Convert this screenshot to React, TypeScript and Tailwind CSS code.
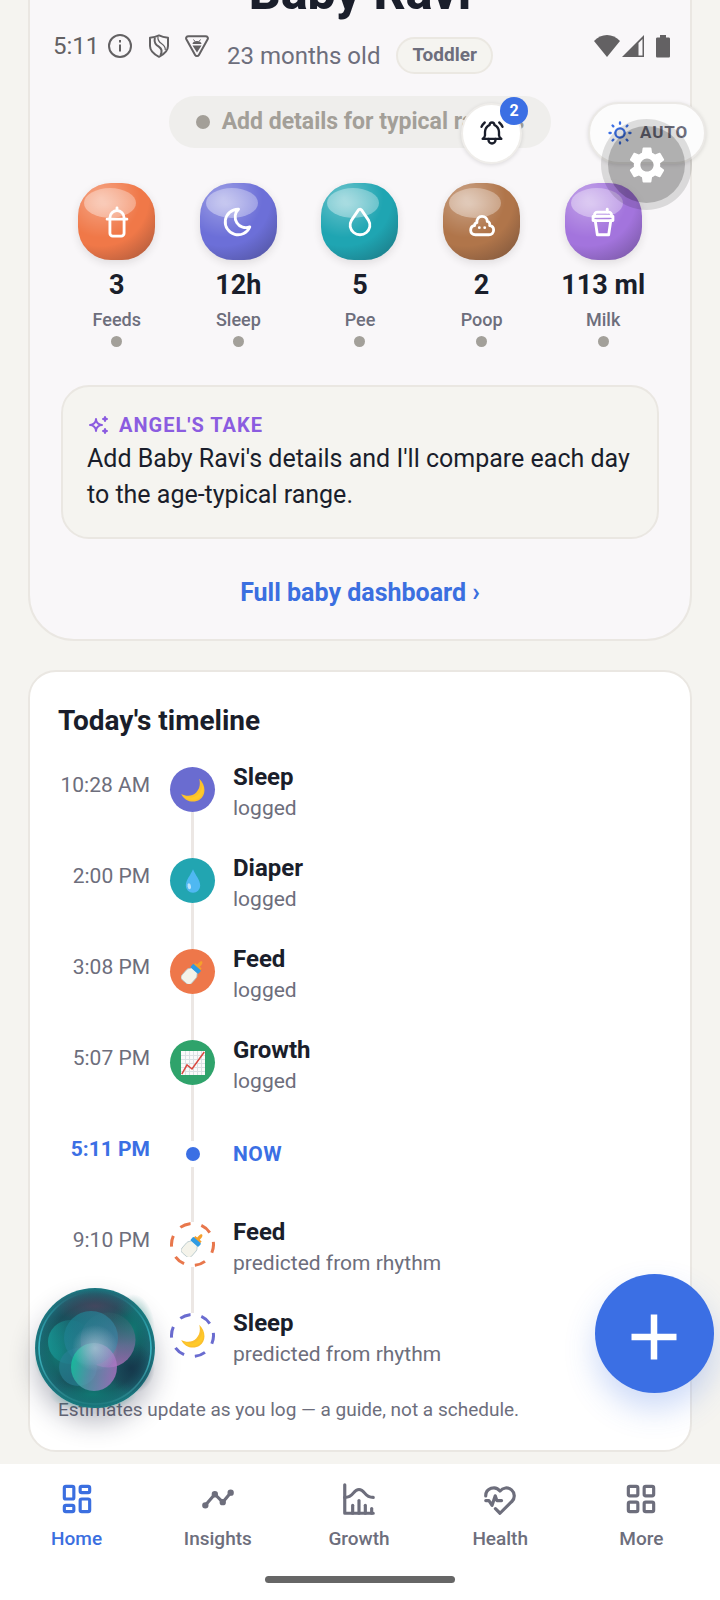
import type { ReactNode } from "react";
import { MdSettings } from "react-icons/md";
import {
  TbBellRinging,
  TbChartHistogram,
  TbCup,
  TbDroplet,
  TbHeartbeat,
  TbLayoutDashboard,
  TbLayoutGrid,
  TbMoon,
  TbSparkles,
  TbSun,
  TbTimeline,
} from "react-icons/tb";

interface Stat {
  icon: ReactNode;
  value: string;
  label: string;
  tile: string;
}

interface TimelineEntry {
  time: string;
  title: string;
  note: string;
  emoji: ReactNode;
  badge: string;
  ring?: string;
}

/* Line icons for the stat tiles */
function BabyBottleIcon() {
  return (
    <svg viewBox="0 0 24 24" className="size-[34px]" fill="none" stroke="currentColor" strokeWidth="2" strokeLinecap="round" strokeLinejoin="round">
      <path d="M5 10h14M12 2v2M12 4a5 5 0 0 1 5 5v11a2 2 0 0 1-2 2H9a2 2 0 0 1-2-2V9a5 5 0 0 1 5-5z" />
    </svg>
  );
}

function PooIcon() {
  return (
    <svg viewBox="0 0 24 24" className="size-[34px]" fill="none" stroke="currentColor" strokeWidth="2" strokeLinecap="round" strokeLinejoin="round">
      <path d="M8.400 12.400C8.200 10 9.700 8 12 8c2.200 0 3.700 1.600 3.700 3.600 1.500.3 2 1.600 1.700 2.900 1.700.2 2.800 1.500 2.800 3.100 0 2-1.400 3.400-3.400 3.400H7.300C5.300 21 4 19.600 4 17.900c0-1.800 1.100-3.100 2.700-3.300 0-1.200.6-2 1.700-2.200z" />
      <path d="M10.100 16h.01M13.900 16h.01" />
    </svg>
  );
}

/* Small colour glyphs */
function MoonGlyph() {
  return (
    <svg viewBox="0 0 24 24" className="size-6" aria-hidden="true">
      <path d="M18.3.8c7 6.800 6.600 16.400.5 20.700C12.800 25.500 3.500 23.500.2 15.900c5.300 2.900 11.300 2.300 15-1.500C18.800 10.700 19.500 6 18.300.8z" fill="#fbc02d" />
      <path d="M21.600 6.500c2 6-.3 12.300-5.200 14.600-4.800 2.200-10.800.6-14-3 5.300 2.400 10.800 1.800 14.500-1.700 3.100-2.900 4.400-6.300 4.700-9.900z" fill="#ffca28" />
    </svg>
  );
}

function DropGlyph() {
  return (
    <svg viewBox="0 0 24 24" className="size-6" aria-hidden="true">
      <path d="M12 .3c2.500 6.200 7.200 10.600 7.200 16.400A7.100 7.100 0 0 1 12 23.800a7.100 7.100 0 0 1-7.200-7.100C4.800 10.900 9.500 6.500 12 .3z" fill="#4fb8f2" />
      <ellipse cx="8.300" cy="17.300" rx="1.700" ry="3" fill="#b9e3fb" transform="rotate(-12 8.300 17.300)" />
    </svg>
  );
}

function BottleGlyph() {
  return (
    <svg viewBox="0 0 24 24" className="size-6" aria-hidden="true">
      <g transform="rotate(41 12 12)">
        <path d="M10.300 1.500c0-4.400 3.400-4.400 3.400 0v2.200h2.500v2.600H7.800V3.700h2.500z" fill="#f5a02c" />
        <path d="M8.200 9.500h7.600c.3 2 2.500 2.600 2.500 5v7c0 2.400-1.500 3.400-3.500 3.400H9.200c-2 0-3.500-1-3.500-3.400v-7c0-2.400 2.200-3 2.500-5z" fill="#f4f3ea" stroke="#b4c5c8" strokeWidth="0.8" />
        <rect x="6.700" y="5.600" width="10.600" height="4.600" rx="1" fill="#2f9be3" />
      </g>
    </svg>
  );
}

function ChartGlyph() {
  return (
    <svg viewBox="0 0 24 24" className="size-6" aria-hidden="true">
      <rect width="24" height="24" fill="#fafafa" />
      <path d="M4.500 0v24M8.500 0v24M12.500 0v24M16.500 0v24M20.500 0v24M0 4.500h24M0 8.500h24M0 12.500h24M0 16.500h24M0 20.500h24" stroke="#dbe1e4" strokeWidth="1" />
      <path d="M.8 23.200 6 14l5 4L23.300 1" fill="none" stroke="#d9483f" strokeWidth="1.500" />
    </svg>
  );
}

const stats: Stat[] = [
  { icon: <BabyBottleIcon />, value: "3", label: "Feeds", tile: "bg-[#f07848]" },
  { icon: <TbMoon />, value: "12h", label: "Sleep", tile: "bg-[#6c6fd8]" },
  { icon: <TbDroplet />, value: "5", label: "Pee", tile: "bg-[#1fa5b2]" },
  { icon: <PooIcon />, value: "2", label: "Poop", tile: "bg-[#b0754a]" },
  { icon: <TbCup />, value: "113 ml", label: "Milk", tile: "bg-[#a374dd]" },
];

const entries: TimelineEntry[] = [
  { time: "10:28 AM", title: "Sleep", note: "logged", emoji: <MoonGlyph />, badge: "bg-[#6a6cd0]" },
  { time: "2:00 PM", title: "Diaper", note: "logged", emoji: <DropGlyph />, badge: "bg-[#22a5b1]" },
  { time: "3:08 PM", title: "Feed", note: "logged", emoji: <BottleGlyph />, badge: "bg-[#ee774a]" },
  { time: "5:07 PM", title: "Growth", note: "logged", emoji: <ChartGlyph />, badge: "bg-[#2fa36b]" },
  { time: "5:11 PM", title: "NOW", note: "", emoji: null, badge: "" },
  { time: "9:10 PM", title: "Feed", note: "predicted from rhythm", emoji: <BottleGlyph />, badge: "bg-white", ring: "#e8774c" },
  { time: "", title: "Sleep", note: "predicted from rhythm", emoji: <MoonGlyph />, badge: "bg-white", ring: "#6a6cd0" },
];

const tabs = [
  { icon: <TbLayoutDashboard />, label: "Home" },
  { icon: <TbTimeline />, label: "Insights" },
  { icon: <TbChartHistogram />, label: "Growth" },
  { icon: <TbHeartbeat />, label: "Health" },
  { icon: <TbLayoutGrid />, label: "More" },
];

function StatusBar() {
  return (
    <div className="absolute inset-x-0 top-[32px] z-20 flex h-7 items-center justify-between pr-[50px] pl-[53px] text-[#636163]">
      <div className="flex items-center">
        <span className="text-2xl">5:11</span>
        <svg viewBox="0 0 24 24" className="ml-[9px] size-6" fill="none" stroke="currentColor" strokeWidth="2">
          <circle cx="12" cy="12" r="11" />
          <path d="M12 10.500v7M12 6v2.400" />
        </svg>
        <svg viewBox="0 0 24 24" className="ml-[15px] size-6" fill="none" stroke="currentColor" strokeWidth="2">
          <path d="M12 1.400c2 1 5 2 9 2.400V12c0 4.800-4 8.300-9 10.800C7 20.300 3 16.800 3 12V3.800c4-.4 7-1.400 9-2.400z" strokeLinejoin="round" />
          <path d="M7.800 3.500c-1 5.500 1.200 7.300 4 9.200 3 2 3.600 4.800 1.700 8.500" />
          <path d="M11 2.500c-.6 3.500.8 5.300 3.700 7.200 2.600 1.700 3.700 3.600 3.600 6.300" strokeWidth="1.200" />
        </svg>
        <svg viewBox="0 0 24 24" className="ml-[14px] size-6" fill="none" stroke="currentColor" strokeWidth="2">
          <path d="M3.500 2.200h17c2 0 3 1.600 2 3.300l-8.600 15.400c-.9 1.600-2.900 1.600-3.800 0L1.500 5.500c-1-1.700 0-3.300 2-3.300z" />
          <path d="M7.500 10c0-4 9-4 9 0zM7.500 11.500h9L12 18.500z" fill="currentColor" stroke="none" />
          <path d="m8.500 5.500 1.500 2m5.500-2-1.500 2" strokeWidth="1" />
        </svg>
      </div>
      <div className="flex items-center">
        <svg viewBox="0 0 26 22" className="h-[22px] w-[26px]" fill="currentColor">
          <path d="M13 22 0 6C7-2 19-2 26 6z" />
        </svg>
        <svg viewBox="0 0 22 22" className="ml-0.5 h-[22px] w-[22px]" fill="currentColor">
          <path d="M22 0v22H0zM16.500 8v12.500h4V4z" fillRule="evenodd" />
        </svg>
        <svg viewBox="0 0 14 24" className="ml-3 h-6 w-3.5" fill="currentColor">
          <path d="M4 1h6v2.500h2.500c1 0 1.500.5 1.500 1.500v17c0 1-.5 1.500-1.500 1.500h-11C.5 23.500 0 23 0 22V5c0-1 .5-1.500 1.500-1.500H4z" />
        </svg>
      </div>
    </div>
  );
}

function StatTile({ stat }: { stat: Stat }) {
  return (
    <div className="flex flex-col items-center">
      <div
        className={`relative flex size-[77px] items-center justify-center rounded-[33px] text-white shadow-[0_3px_8px_rgba(40,30,30,0.12)] ${stat.tile}`}
      >
        <div className="absolute inset-0 rounded-[33px] bg-[radial-gradient(circle_at_30%_20%,rgba(255,255,255,0.34)_0%,rgba(255,255,255,0)_48%,rgba(20,20,30,0)_58%,rgba(20,20,30,0.36)_100%)]" />
        <div className="absolute top-[5px] left-[6px] h-[30px] w-[52px] rounded-[50%] bg-[radial-gradient(ellipse_at_40%_55%,rgba(255,255,255,0.46),rgba(255,255,255,0.26))]" />
        <span className="relative text-[34px]">{stat.icon}</span>
      </div>
      <p className="mt-[9px] text-[27px] leading-8 font-bold whitespace-nowrap">{stat.value}</p>
      <p className="mt-[7px] text-lg leading-6 font-medium text-[#6d6e7c]">{stat.label}</p>
      <span className="mt-1 size-[11px] rounded-full bg-[#a3a09a]" />
    </div>
  );
}

function TimelineRow({ entry, last }: { entry: TimelineEntry; last: boolean }) {
  const isNow = entry.title === "NOW";
  return (
    <li className="flex h-[91px]">
      <time
        className={`w-[92px] shrink-0 pt-[5px] text-right text-[21px] leading-[26px] whitespace-nowrap ${
          isNow ? "font-bold text-[#3b6fe4]" : "text-[#6d6e7c]"
        }`}
      >
        {entry.time}
      </time>
      <div className="ml-5 flex w-[45px] shrink-0 flex-col items-center">
        {isNow ? (
          <>
            <span className="h-2.5 w-[3px] bg-[#ece7e4]" />
            <span className="my-[6px] size-[14px] shrink-0 rounded-full bg-[#3b6fe4]" />
          </>
        ) : (
          <div className={`relative flex size-[45px] shrink-0 items-center justify-center rounded-full ${entry.badge}`}>
            {entry.ring && (
              <svg viewBox="0 0 45 45" className="absolute inset-0 size-[45px]" fill="none">
                <circle cx="22.500" cy="22.500" r="21" stroke={entry.ring} strokeWidth="3" strokeDasharray="11 10.990" transform="rotate(-7 22.500 22.500)" />
              </svg>
            )}
            {entry.emoji}
          </div>
        )}
        {!last && <span className="w-[3px] flex-1 bg-[#ece7e4]" />}
      </div>
      <div className="ml-[18px] min-w-0">
        {isNow ? (
          <p className="pt-[9px] text-[21px] leading-7 font-bold tracking-wide text-[#3b6fe4]">NOW</p>
        ) : (
          <>
            <p className="-mt-1 text-2xl leading-7 font-bold">{entry.title}</p>
            <p className="mt-1 text-[21px] leading-[26px] text-[#6d6e7c]">{entry.note}</p>
          </>
        )}
      </div>
    </li>
  );
}

function Orb() {
  return (
    <svg viewBox="0 0 120 120" className="size-[120px]" aria-hidden="true">
      <defs>
        <radialGradient id="orb-base" cx="0.5" cy="0.5" r="0.5">
          <stop offset="0" stopColor="#216873" />
          <stop offset="0.75" stopColor="#1a4e5b" />
          <stop offset="0.9" stopColor="#1c616e" />
          <stop offset="1" stopColor="#1c7882" />
        </radialGradient>
        <radialGradient id="orb-green">
          <stop offset="0" stopColor="#0d8479" stopOpacity="0.75" />
          <stop offset="1" stopColor="#0d8479" stopOpacity="0" />
        </radialGradient>
        <radialGradient id="orb-plum">
          <stop offset="0" stopColor="#50445f" stopOpacity="0.75" />
          <stop offset="1" stopColor="#50445f" stopOpacity="0" />
        </radialGradient>
        <radialGradient id="orb-navy">
          <stop offset="0" stopColor="#143449" stopOpacity="0.85" />
          <stop offset="1" stopColor="#143449" stopOpacity="0" />
        </radialGradient>
        <linearGradient id="orb-a" x1="0" y1="0" x2="1" y2="0.6">
          <stop offset="0" stopColor="#17818d" />
          <stop offset="1" stopColor="#3c83a4" />
        </linearGradient>
        <linearGradient id="orb-b" x1="0" y1="0.5" x2="1" y2="0.5">
          <stop offset="0" stopColor="#189a98" />
          <stop offset="1" stopColor="#15717b" stopOpacity="0" />
        </linearGradient>
        <linearGradient id="orb-c" x1="0.5" y1="0" x2="0.5" y2="1">
          <stop offset="0" stopColor="#35696e" stopOpacity="0.3" />
          <stop offset="0.6" stopColor="#716f9b" />
          <stop offset="1" stopColor="#b070bd" />
        </linearGradient>
        <linearGradient id="orb-e" x1="0" y1="0.4" x2="1" y2="0.6">
          <stop offset="0" stopColor="#14c9a1" />
          <stop offset="0.45" stopColor="#6493b0" />
          <stop offset="1" stopColor="#b574c9" />
        </linearGradient>
        <radialGradient id="orb-glow">
          <stop offset="0" stopColor="#c3d6e2" stopOpacity="0.6" />
          <stop offset="1" stopColor="#c3d6e2" stopOpacity="0" />
        </radialGradient>
        <linearGradient id="orb-rim" x1="0" y1="0" x2="0" y2="1">
          <stop offset="0" stopColor="#35b9ca" stopOpacity="0" />
          <stop offset="0.5" stopColor="#42cad9" stopOpacity="0.85" />
          <stop offset="1" stopColor="#52b9bd" stopOpacity="0.15" />
        </linearGradient>
      </defs>
      <circle cx="60" cy="60" r="60" fill="url(#orb-base)" />
      <ellipse cx="98" cy="42" rx="22" ry="36" fill="url(#orb-green)" />
      <ellipse cx="22" cy="65" rx="24" ry="36" fill="url(#orb-green)" />
      <ellipse cx="58" cy="106" rx="44" ry="18" fill="url(#orb-green)" />
      <ellipse cx="60" cy="18" rx="42" ry="16" fill="url(#orb-plum)" />
      <ellipse cx="96" cy="80" rx="24" ry="26" fill="url(#orb-navy)" />
      <circle cx="35" cy="54" r="22" fill="url(#orb-b)" opacity="0.8" />
      <circle cx="73" cy="52" r="27.500" fill="url(#orb-c)" opacity="0.8" />
      <circle cx="56" cy="50" r="27" fill="url(#orb-a)" opacity="0.68" />
      <circle cx="43" cy="79" r="19" fill="#2a8096" opacity="0.6" />
      <ellipse cx="59" cy="79" rx="23" ry="24" fill="url(#orb-e)" opacity="0.78" />
      <circle cx="60" cy="60" r="23" fill="url(#orb-glow)" />
      <circle cx="60" cy="60" r="56" fill="none" stroke="url(#orb-rim)" strokeWidth="1.500" />
    </svg>
  );
}

export default function App() {
  return (
    <div className="relative flex min-h-screen flex-col overflow-hidden bg-[#f5f4f0] font-['Roboto',sans-serif] text-[#1a1e2b]">
      <StatusBar />

      {/* Floating controls */}
      <div className="absolute top-[102px] right-[14px] z-10 flex items-center gap-[66px]">
        <button
          aria-label="Notifications"
          className="relative flex size-[61px] items-center justify-center rounded-full border-2 border-[#efedea] bg-white text-[28px] shadow-[0_1px_4px_rgba(0,0,0,0.12)]"
        >
          <TbBellRinging />
          <span className="absolute -top-2 -right-2 flex size-7 items-center justify-center rounded-full bg-[#3b6fe4] text-base font-bold text-white">
            2
          </span>
        </button>
        <button className="flex h-[62px] items-center gap-1.5 rounded-full border-2 border-[#ebe9e6] bg-[#fcfcfc] px-4 text-[17px] font-bold tracking-wider text-[#6d6e7c] shadow-[0_1px_4px_rgba(0,0,0,0.12)]">
          <TbSun className="size-7 text-[#3b6fe4]" />
          AUTO
        </button>
      </div>
      <button
        aria-label="Settings"
        className="absolute top-[119px] right-[28px] z-20 flex size-[91px] items-center justify-center rounded-full bg-black/12"
      >
        <span className="flex size-[77px] items-center justify-center rounded-full bg-black/20 text-[44px] text-white">
          <MdSettings />
        </span>
      </button>

      <main className="flex flex-1 flex-col px-7 pb-3">
        {/* Baby summary */}
        <section className="-mt-[60px] rounded-b-[46px] border-2 border-[#eae7e2] bg-[#f9f7f9] pb-[30px]">
          <h1 className="pt-[18px] text-center text-[50px] leading-[64px] font-extrabold">Baby Ravi</h1>
          <div className="mt-[13px] flex items-center justify-center gap-4">
            <p className="text-2xl leading-9 text-[#6d6e7c]">23 months old</p>
            <span className="flex h-[37px] items-center rounded-full border-2 border-[#ebe8e2] bg-[#f5f4f0] px-3.5 text-[19px] font-bold text-[#6d6e7c]">
              Toddler
            </span>
          </div>

          <div className="mt-[22px] flex justify-center">
            <p className="flex h-[52px] items-center gap-3 rounded-full bg-[#efeeec] px-[27px] text-[23px] font-bold text-[#a39f98]">
              <span className="size-[14px] rounded-full bg-[#a39f98]" />
              Add details for typical ranges
            </p>
          </div>

          <div className="mt-[35px] grid grid-cols-5 px-[26px]">
            {stats.map((stat) => (
              <StatTile key={stat.label} stat={stat} />
            ))}
          </div>

          <div className="mx-[31px] mt-[38px] rounded-[28px] border-2 border-[#eae7e2] bg-[#f5f4f0] px-6 pt-6 pb-6">
            <h2 className="flex items-center gap-2 text-xl leading-7 font-bold tracking-wider text-[#8b5ce0]">
              <TbSparkles className="size-6" />
              ANGEL'S TAKE
            </h2>
            <p className="mt-0.5 text-[25px] leading-9">
              Add Baby Ravi's details and I'll compare each day to the age-typical range.
            </p>
          </div>

          <div className="mt-[38px] text-center">
            <a href="#dashboard" className="text-[25px] leading-8 font-bold text-[#3b6fe0]">
              Full baby dashboard ›
            </a>
          </div>
        </section>

        {/* Timeline */}
        <section className="mt-[29px] rounded-[28px] border-2 border-[#eae7e2] bg-white px-7 pt-[31px] pb-7">
          <h2 className="text-[28px] leading-9 font-bold">Today's timeline</h2>
          <ol className="mt-7">
            {entries.map((entry, i) => (
              <TimelineRow key={i} entry={entry} last={i === entries.length - 1} />
            ))}
          </ol>
          <p className="-mt-1.5 text-[19px] leading-6 text-[#6d6e7c]">Estimates update as you log — a guide, not a schedule.</p>
        </section>
      </main>

      {/* Bottom navigation */}
      <footer className="relative bg-white">
        <button
          aria-label="Ask Angel"
          className="absolute -top-[176px] left-[35px] rounded-full shadow-[0_14px_26px_rgba(25,30,60,0.3)]"
        >
          <Orb />
        </button>
        <button
          aria-label="Add entry"
          className="absolute -top-[190px] right-[6px] flex size-[119px] items-center justify-center rounded-full bg-[#3b6fe4] text-white shadow-[0_16px_30px_rgba(59,111,228,0.25)]"
        >
          <svg viewBox="0 0 60 60" className="size-[60px]" stroke="currentColor" strokeWidth="6.500">
            <path d="M29 10.500v45M6.500 33h45" />
          </svg>
        </button>
        <nav className="grid grid-cols-5 pt-4 pr-2 pl-1.5">
          {tabs.map((tab, i) => (
            <a
              key={tab.label}
              href={`#${tab.label.toLowerCase()}`}
              className={`flex flex-col items-center text-[19px] font-medium ${i === 0 ? "text-[#3b6fe0]" : "text-[#6d6e7c]"}`}
            >
              <span className="text-[38px]">{tab.icon}</span>
              <span className="mt-[9px] leading-6">{tab.label}</span>
            </a>
          ))}
        </nav>
        <div className="mx-auto mt-[25px] mb-[17px] h-[7px] w-[190px] rounded-full bg-[#666666]" />
      </footer>
    </div>
  );
}
